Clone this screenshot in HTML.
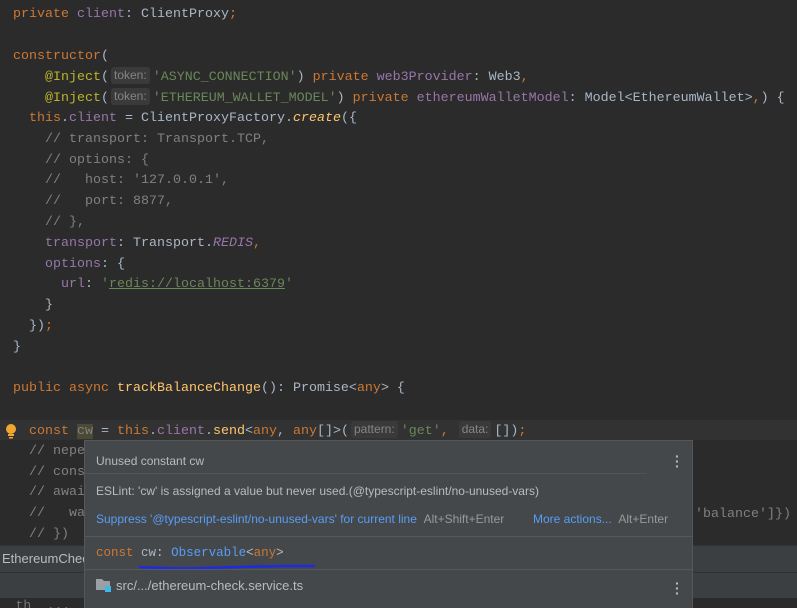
<!DOCTYPE html>
<html><head><meta charset="utf-8"><style>
html,body{margin:0;width:797px;height:608px;overflow:hidden;}
body{background:#2b2b2b;position:relative;font-family:"Liberation Mono",monospace;}
.code{position:absolute;left:13px;top:5px;font-size:13.33px;line-height:20.8px;color:#a9b7c6;}
.l{height:20.8px;white-space:pre}
.k{color:#cc7832}.f{color:#9876aa}.s{color:#6a8759}.c{color:#808080}.fn{color:#ffc66d}.d{color:#bbb529}.i{font-style:italic}
.h{display:inline-block;font-family:"Liberation Sans",sans-serif;font-size:12px;color:#858585;background:#3a3a3a;border-radius:3px;padding:0 3px;line-height:17px;margin:0 3px 0 2px;vertical-align:1px}
.cur{position:absolute;left:0;top:420px;width:797px;height:20px;background:#323232}
.tab{position:absolute;left:0;top:545px;width:797px;height:26px;background:#3c3f41;border-top:1px solid #323232}
.tab2{position:absolute;left:0;top:572px;width:797px;height:25px;background:#3c3f41;border-top:1px solid #2f3133}
.pop{position:absolute;left:84px;top:440px;width:607px;height:168px;background:#45484a;border:1px solid #55585a;font-family:"Liberation Sans",sans-serif;color:#bbbbbb;font-size:13px}
.pop div{position:absolute;white-space:nowrap}
.blue{color:#589df6}
.dots{color:#bbb;font-weight:bold;font-size:14px;line-height:5px;width:4px}
</style></head><body>
<div class="cur"></div>
<div class="code"><div class="l"><span class="k">private</span> <span class="f">client</span>: ClientProxy<span class="k">;</span></div><div class="l"></div><div class="l"><span class="k">constructor</span>(</div><div class="l">    <span class="d">@Inject</span>(<span class="h">token:</span><span class="s">'ASYNC_CONNECTION'</span>) <span class="k">private</span> <span class="f">web3Provider</span>: Web3<span class="k">,</span></div><div class="l">    <span class="d">@Inject</span>(<span class="h">token:</span><span class="s">'ETHEREUM_WALLET_MODEL'</span>) <span class="k">private</span> <span class="f">ethereumWalletModel</span>: Model&lt;EthereumWallet&gt;<span class="k">,</span>) {</div><div class="l">  <span class="k">this</span>.<span class="f">client</span> = ClientProxyFactory.<span class="fn i">create</span>({</div><div class="l c">    // transport: Transport.TCP,</div><div class="l c">    // options: {</div><div class="l c">    //   host: '127.0.0.1',</div><div class="l c">    //   port: 8877,</div><div class="l c">    // },</div><div class="l">    <span class="f">transport</span>: Transport.<span class="f i">REDIS</span><span class="k">,</span></div><div class="l">    <span class="f">options</span>: {</div><div class="l">      <span class="f">url</span>: <span class="s">'<u>redis://localhost:6379</u>'</span></div><div class="l">    }</div><div class="l">  })<span class="k">;</span></div><div class="l">}</div><div class="l"></div><div class="l"><span class="k">public async</span> <span class="fn">trackBalanceChange</span>(): Promise&lt;<span class="k">any</span>&gt; {</div><div class="l"></div><div class="l">  <span class="k">const</span> <span style="color:#808080;background:#4a4a35">cw</span> = <span class="k">this</span>.<span class="f">client</span>.<span class="fn">send</span>&lt;<span class="k">any</span>, <span class="k">any</span>[]&gt;(<span class="h">pattern:</span><span class="s">'get'</span><span class="k">,</span> <span class="h">data:</span>[])<span class="k">;</span></div><div class="l c">  // nepe</div><div class="l c">  // cons</div><div class="l c">  // awai</div><div class="l c">  //   wa</div><div class="l c">  // })</div></div>
<div style="position:absolute;left:695px;top:505px;font-size:13.33px;line-height:20.8px;color:#808080;white-space:pre">'balance']})</div>
<svg style="position:absolute;left:4px;top:423px" width="14" height="16"><circle cx="7" cy="6" r="5" fill="#f0a732"/><rect x="4" y="11" width="6" height="2" fill="#f0a732"/><rect x="5" y="14" width="4" height="1.5" fill="#f0a732"/></svg>
<div class="tab"><span style="position:absolute;left:2px;top:5px;font-family:'Liberation Sans',sans-serif;font-size:13px;color:#bbb">EthereumCheck</span></div>
<div class="tab2"></div>
<div style="position:absolute;left:0;top:598px;font-size:13px;color:#777;white-space:pre">  th  ...   li</div>
<div class="pop">
<div style="left:11px;top:13px;font-size:12px">Unused constant cw</div>
<div class="dots" style="left:590px;top:13px">·<br>·<br>·</div>
<div style="left:0;top:32px;width:562px;height:1px;background:#515456"></div>
<div style="left:11px;top:43px;font-size:12px">ESLint: 'cw' is assigned a value but never used.(@typescript-eslint/no-unused-vars)</div>
<div style="left:11px;top:71px;font-size:12px"><span class="blue">Suppress '@typescript-eslint/no-unused-vars' for current line</span>&nbsp;&nbsp;<span style="color:#999">Alt+Shift+Enter</span></div>
<div style="left:448px;top:71px;font-size:12px"><span class="blue">More actions...</span>&nbsp;&nbsp;<span style="color:#999">Alt+Enter</span></div>
<div style="left:0;top:95px;width:607px;height:1px;background:#56595b"></div>
<div style="left:11px;top:105px;font-family:'Liberation Mono',monospace;font-size:12.5px"><span class="k">const</span> <span style="color:#a9b7c6">cw</span>: <span class="blue">Observable</span>&lt;<span class="k">any</span>&gt;</div>
<svg style="position:absolute;left:50px;top:121px" width="180" height="10"><path d="M4 5 Q40 7 70 6 T150 4 L190 4" stroke="#1e2adf" stroke-width="2.5" fill="none"/></svg>
<div style="left:0;top:128px;width:607px;height:1px;background:#56595b"></div>
<svg style="position:absolute;left:11px;top:136px" width="16" height="16"><path d="M0 2h6l2 2h6v9H0z" fill="#9aa0a6"/><rect x="9" y="9" width="6" height="6" fill="#3eb8e6"/></svg>
<div style="left:31px;top:137px">src/.../ethereum-check.service.ts</div>
<div class="dots" style="left:590px;top:140px">·<br>·<br>·</div>
</div>
</body></html>
